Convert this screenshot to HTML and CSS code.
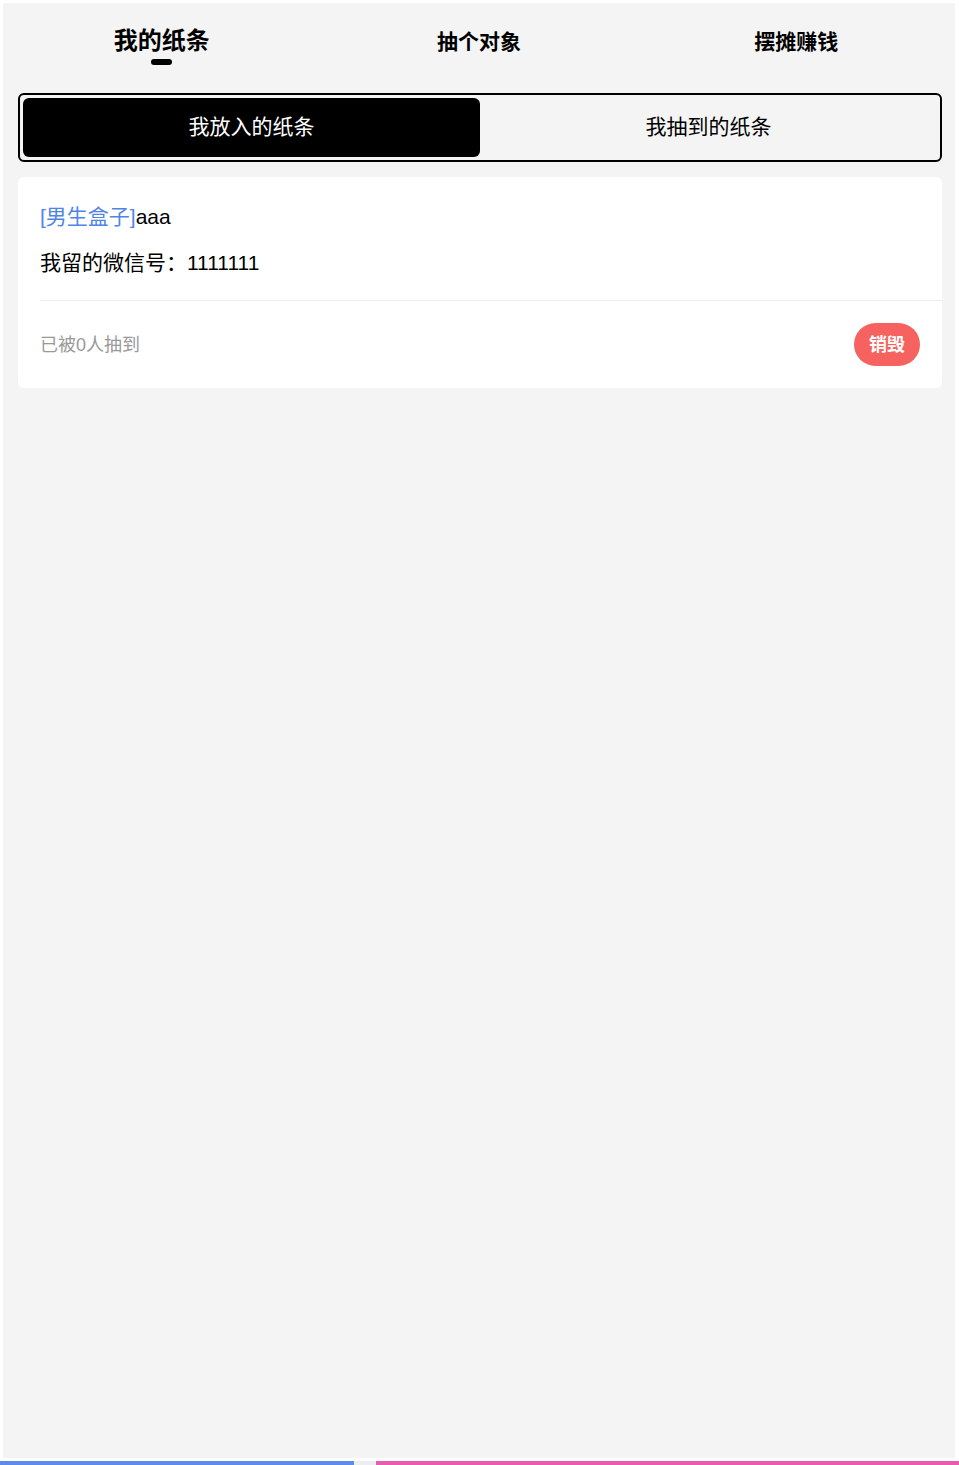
FILE: index.html
```html
<!DOCTYPE html>
<html>
<head>
    <title>纸条</title>
    <link rel="stylesheet" href="styles.css">
</head>
<body>
    <div class="frame">
        <ul class="nav">
            <li class="nav-item active">我的纸条<i class="dot"></i></li>
            <li class="nav-item">抽个对象</li>
            <li class="nav-item">摆摊赚钱</li>
        </ul>

        <div class="seg">
            <div class="seg-item on">我放入的纸条</div>
            <div class="seg-item">我抽到的纸条</div>
        </div>

        <div class="card">
            <div class="card-body">
                <p class="line"><span class="tag">[男生盒子]</span>aaa</p>
                <p class="line wx">我留的微信号：1111111</p>
            </div>
            <div class="card-foot">
                <span class="count">已被0人抽到</span>
                <button class="btn-del">销毁</button>
            </div>
        </div>
    </div>
    <div class="bottom-bar">
        <span class="bar-blue"></span>
        <span class="bar-gap"></span>
        <span class="bar-pink"></span>
    </div>
</body>
</html>
```

FILE: styles.css
```css
*{padding: 0;margin: 0;box-sizing: border-box;}
body{
    background: #fff;
    font-family: "Liberation Sans", "Noto Sans CJK SC", sans-serif;
    color: #000;
}
ul{list-style: none;}
.frame{
    margin: 3px 4px 0 3px;
    height: 1455px;
    background: #f4f4f4;
    padding-top: 1px;
}
.nav{
    display: flex;
    height: 89px;
}
.nav-item{
    flex: 1;
    display: flex;
    flex-direction: column;
    align-items: center;
    padding-top: 23px;
    font-size: 21px;
    line-height: 30px;
    font-weight: bold;
}
.nav-item.active{
    padding-top: 22px;
    font-size: 24px;
}
.dot{
    display: block;
    width: 21px;
    height: 6px;
    margin-top: 3px;
    border-radius: 3px;
    background: #000;
}
.seg{
    display: flex;
    margin: 0 13px 0 15px;
    height: 69px;
    border: 2px solid #000;
    border-radius: 6px;
    padding: 3px;
}
.seg-item{
    flex: 1;
    display: flex;
    align-items: center;
    justify-content: center;
    padding-bottom: 5px;
    font-size: 21px;
    border-radius: 6px;
}
.seg-item.on{
    background: #000;
    color: #fff;
}
.card{
    margin: 15px 13px 0 15px;
    background: #fff;
    border-radius: 6px;
}
.card-body{
    padding: 24px 22px 22px 0;
    border-bottom: 1px solid #ececec;
    margin-left: 22px;
}
.line{
    font-size: 21px;
    line-height: 31px;
}
.wx{
    margin-top: 15px;
}
.tag{
    color: #4f86e6;
}
.card-foot{
    display: flex;
    align-items: center;
    justify-content: space-between;
    height: 87px;
    padding: 0 22px;
}
.count{
    font-size: 18px;
    color: #999;
    margin-top: -3px;
}
.btn-del{
    width: 66px;
    height: 43px;
    padding-bottom: 3px;
    border: none;
    border-radius: 22px;
    background: #f5625f;
    color: #fff;
    font-family: inherit;
    font-size: 18px;
    font-weight: bold;
}
.bottom-bar{
    display: flex;
    margin-top: 3px;
    height: 4px;
}
.bar-blue{
    width: 354px;
    background: #5b8de6;
}
.bar-gap{
    width: 22px;
    background: #eceeef;
}
.bar-pink{
    flex: 1;
    background: #e85bb0;
}
```
